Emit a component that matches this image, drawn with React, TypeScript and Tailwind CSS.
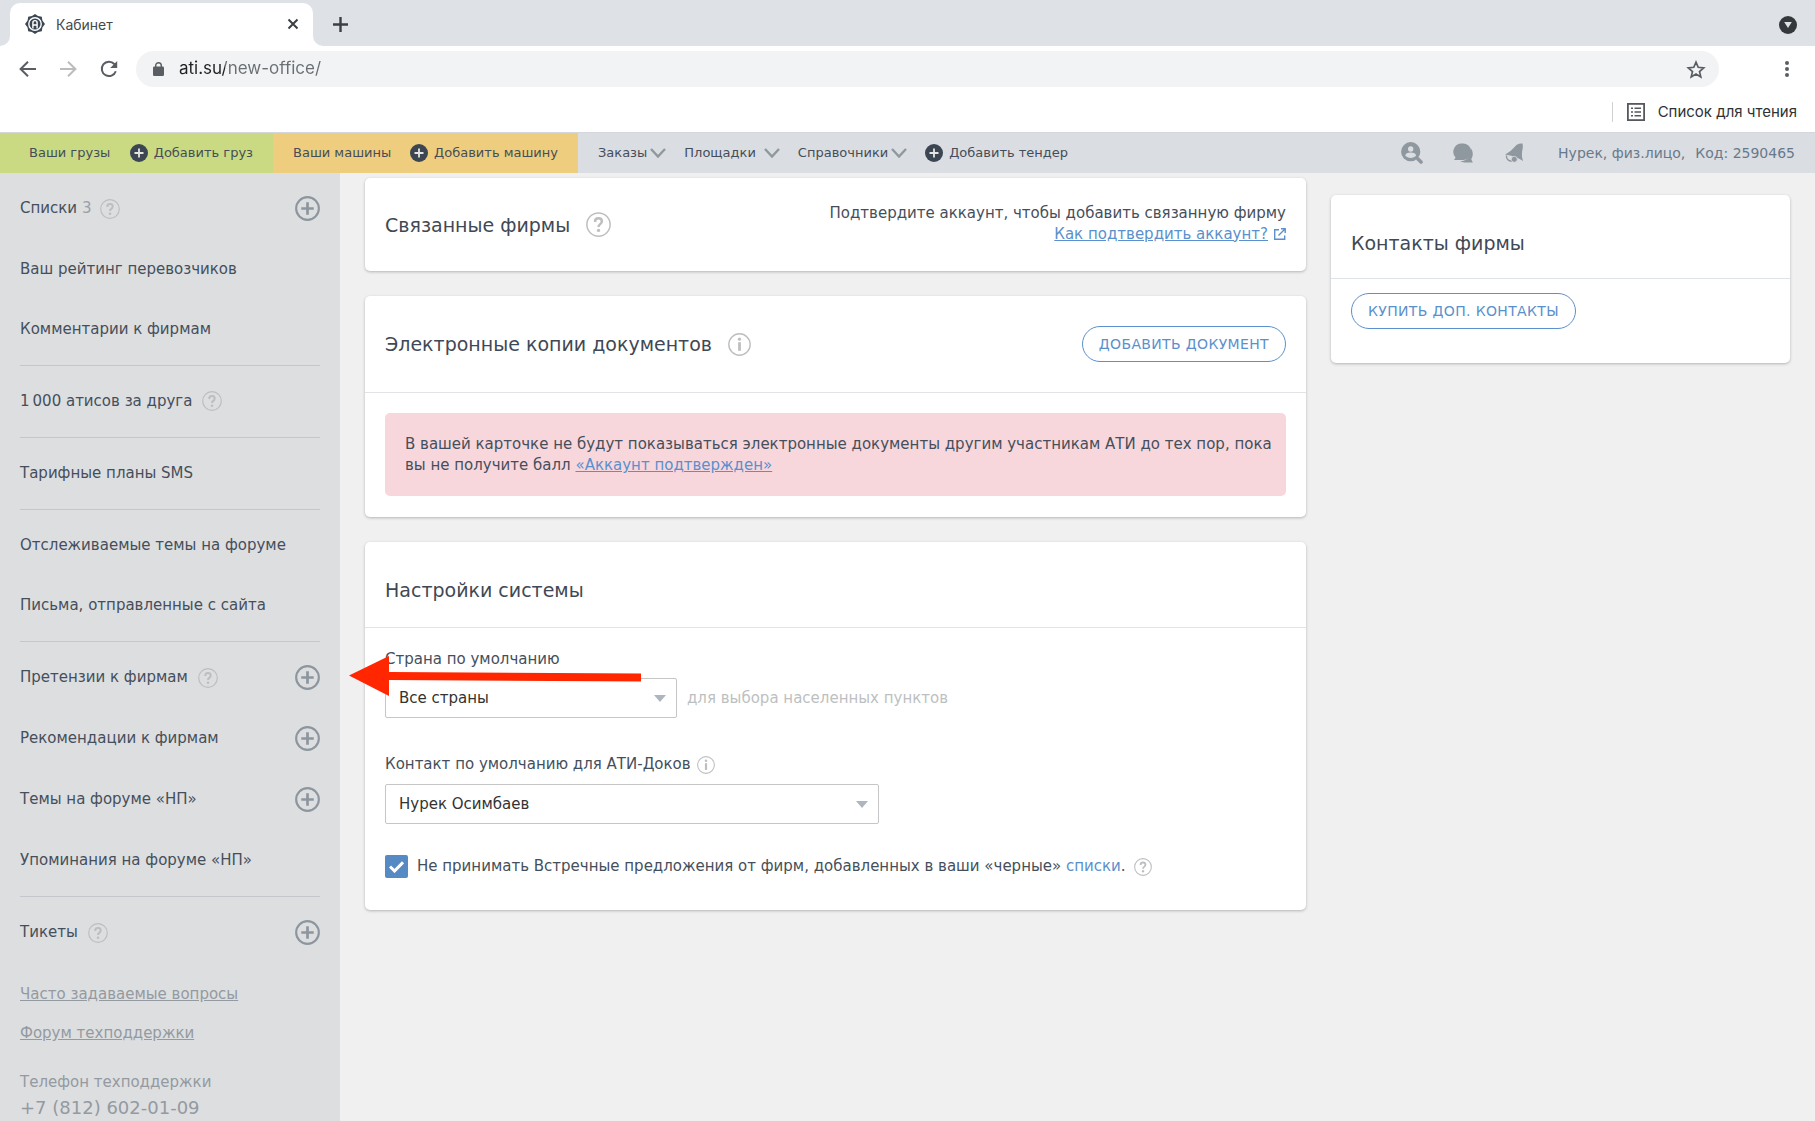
import type { ReactNode } from 'react';

function QuestionIcon({ size = 20 }: { size?: number }) {
  return (
    <svg width={size} height={size} viewBox="0 0 20 20" fill="none" className="shrink-0 text-[#bcbec0]" aria-hidden="true">
      <circle cx="10" cy="10" r="9.3" stroke="currentColor" strokeWidth="1.2" />
      <path d="M7.3 7.9V7.4C7.3 5.9 8.4 5 10 5s2.7.9 2.7 2.4c0 1.2-.6 1.8-1.5 2.5-.8.6-1.2 1-1.2 2.1" stroke="currentColor" strokeWidth="2" />
      <circle cx="10" cy="14.7" r="1.3" fill="currentColor" />
    </svg>
  );
}

function InfoIcon({ size = 20 }: { size?: number }) {
  return (
    <svg width={size} height={size} viewBox="0 0 20 20" fill="none" className="shrink-0 text-[#bcbec0]" aria-hidden="true">
      <circle cx="10" cy="10" r="9.3" stroke="currentColor" strokeWidth="1.2" />
      <circle cx="10" cy="5.4" r="1.4" fill="currentColor" />
      <path d="M10 8v7.5" stroke="currentColor" strokeWidth="2.4" />
    </svg>
  );
}

function AddCircle() {
  return (
    <svg width="25" height="25" viewBox="0 0 26 26" fill="none" className="text-[#8d969e]" aria-hidden="true">
      <circle cx="13" cy="13" r="11.8" stroke="currentColor" strokeWidth="2.2" />
      <path d="M13 6.5v13M6.5 13h13" stroke="currentColor" strokeWidth="2.8" />
    </svg>
  );
}

function PlusDot() {
  return (
    <svg width="18" height="18" viewBox="0 0 18 18" fill="none" className="shrink-0" aria-hidden="true">
      <circle cx="9" cy="9" r="9" fill="#3c4653" />
      <path d="M9 4.5v9M4.5 9h9" stroke="#e4e6df" strokeWidth="1.8" />
    </svg>
  );
}

function Chevron() {
  return (
    <svg width="16" height="10" viewBox="0 0 16 10" fill="none" className="shrink-0" aria-hidden="true">
      <path d="M1 1l7 7.5L15 1" stroke="#8f999d" strokeWidth="2.4" />
    </svg>
  );
}

function SiteLogo() {
  return (
    <svg width="20" height="20" viewBox="0 0 20 20" fill="none" aria-hidden="true">
      <path d="M10 0l3 1.900 3.800.800.600 3.900L20 10l-2.600 3.400-.6 3.900-3.800.8L10 20l-3-1.900-3.800-.8-.6-3.900L0 10l2.600-3.400.6-3.900L7 1.900z" fill="#3c4653" />
      <circle cx="10" cy="10" r="6.900" fill="#fff" />
      <circle cx="10" cy="10" r="5.500" fill="#3c4653" />
      <path d="M7.900 14.500V8.700a2.100 2.100 0 0 1 4.200 0v5.800M7.900 11h4.200" stroke="#fff" strokeWidth="1.400" />
    </svg>
  );
}

function BrowserChrome() {
  return (
    <header className="font-['Inter',sans-serif]">
      <div className="flex h-[46px] items-end bg-[#dee1e6] pl-[10px] pr-[18px]">
        <div className="relative flex h-[43px] w-[303px] items-center rounded-t-[10px] bg-white pb-px pl-[15px] pr-[14px]">
          <SiteLogo />
          <span className="ml-[11px] flex-1 text-[14px] text-[#45494d]">Кабинет</span>
          <button aria-label="Закрыть вкладку">
            <svg width="12" height="12" viewBox="0 0 12 12" aria-hidden="true">
              <path d="M1.500 1.500l9 9M10.500 1.500l-9 9" stroke="#3c4043" strokeWidth="2" />
            </svg>
          </button>
          <svg className="absolute bottom-0 -left-[10px]" width="10" height="10" viewBox="0 0 10 10" aria-hidden="true">
            <path d="M10 0v10H0A10 10 0 0 0 10 0z" fill="#fff" />
          </svg>
          <svg className="absolute bottom-0 -right-[10px]" width="10" height="10" viewBox="0 0 10 10" aria-hidden="true">
            <path d="M0 0v10h10A10 10 0 0 1 0 0z" fill="#fff" />
          </svg>
        </div>
        <button aria-label="Новая вкладка" className="ml-5 flex h-[43px] items-center">
          <svg width="15" height="15" viewBox="0 0 15 15" aria-hidden="true">
            <path d="M7.500 0v15M0 7.500h15" stroke="#3c4043" strokeWidth="2.400" />
          </svg>
        </button>
        <button aria-label="Поиск вкладок" className="ml-auto flex h-[43px] items-center">
          <svg width="18" height="18" viewBox="0 0 18 18" aria-hidden="true">
            <circle cx="9" cy="9" r="9" fill="#35393c" />
            <path d="M5.200 6h7.600L9 12z" fill="#dee1e6" />
          </svg>
        </button>
      </div>

      <div className="flex h-[46px] items-center bg-white pl-[19px] pr-[25px]">
        <button aria-label="Назад">
          <svg width="17" height="16" viewBox="0 0 17 16" fill="none" aria-hidden="true">
            <path d="M17 8H2M9 .8L1.600 8 9 15.200" stroke="#5a5e63" strokeWidth="2" />
          </svg>
        </button>
        <button aria-label="Вперёд" className="ml-6">
          <svg width="17" height="16" viewBox="0 0 17 16" fill="none" aria-hidden="true">
            <path d="M0 8h15M8 .8L15.400 8 8 15.200" stroke="#babcbe" strokeWidth="2" />
          </svg>
        </button>
        <button aria-label="Обновить" className="ml-[23px]">
          <svg width="18" height="18" viewBox="0 0 18 18" fill="none" aria-hidden="true">
            <path d="M15.800 11.200A7.200 7.200 0 1 1 14.300 4l1.200 1.300" stroke="#5a5e63" strokeWidth="2" />
            <path d="M17.200 1v7h-7z" fill="#5a5e63" />
          </svg>
        </button>
        <div className="ml-[18px] flex h-9 flex-1 items-center rounded-full bg-[#f1f3f4] pl-[17px] pr-[13px]">
          <svg width="11" height="14" viewBox="0 0 11 14" fill="none" aria-hidden="true">
            <rect y="4.600" width="11" height="9.400" rx="1.200" fill="#5a5e63" />
            <path d="M2.700 5.500V3.500a2.800 2.800 0 0 1 5.600 0v2" stroke="#5a5e63" strokeWidth="1.400" />
          </svg>
          <input
            aria-label="Адрес страницы"
            defaultValue="ati.su/new-office/"
            className="ml-[15px] min-w-0 flex-1 bg-[linear-gradient(to_right,#202124_46px,#6a6e73_46px)] bg-clip-text text-[17px] text-transparent outline-none"
          />
          <button aria-label="Добавить в закладки">
            <svg width="20" height="19" viewBox="0 0 20 19" fill="none" aria-hidden="true">
              <path d="M10 2.200l2.200 5.100 5.500.5-4.200 3.700 1.300 5.400-4.800-2.900-4.800 2.900 1.300-5.400-4.200-3.700 5.500-.5z" stroke="#5a5e63" strokeWidth="1.700" />
            </svg>
          </button>
        </div>
        <button aria-label="Меню браузера" className="ml-[65px]">
          <svg width="6" height="18" viewBox="0 0 6 18" fill="#5a5e63" aria-hidden="true">
            <circle cx="3" cy="3" r="2" />
            <circle cx="3" cy="9" r="2" />
            <circle cx="3" cy="15" r="2" />
          </svg>
        </button>
      </div>

      <div className="flex h-10 items-center justify-end bg-white pr-[18px]">
        <span className="h-5 w-px bg-[#cfd1d4]" />
        <button className="ml-[14px] flex items-center gap-[13px] text-[15px] text-[#2f3235]">
          <svg width="18" height="18" viewBox="0 0 18 18" fill="none" aria-hidden="true">
            <rect x=".9" y=".9" width="16.200" height="16.200" stroke="#55595e" strokeWidth="1.800" />
            <path d="M4 5.200h2M4 9h2M4 12.800h2M7.500 5.200H14M7.500 9H14M7.500 12.800H14" stroke="#55595e" strokeWidth="1.600" />
          </svg>
          Список для чтения
        </button>
      </div>
    </header>
  );
}

function NavLink({ children }: { children: ReactNode }) {
  return (
    <a href="#" className="flex items-center gap-[6px] whitespace-nowrap">
      {children}
    </a>
  );
}

function SiteNav() {
  return (
    <nav className="flex h-[41px] items-stretch border-t border-[#d3d7dc] bg-[#dadde2] text-[13px] text-[#454e58]">
      <div className="flex w-[273px] items-center justify-between bg-[#c9da83] pl-[29px] pr-5">
        <NavLink>Ваши грузы</NavLink>
        <NavLink>
          <PlusDot />
          Добавить груз
        </NavLink>
      </div>
      <div className="flex w-[305px] items-center justify-between bg-[#efcd7e] pl-5 pr-5">
        <NavLink>Ваши машины</NavLink>
        <NavLink>
          <PlusDot />
          Добавить машину
        </NavLink>
      </div>
      <div className="flex flex-1 items-center gap-[18px] pl-5">
        <button className="flex items-center gap-[3px]">
          Заказы
          <Chevron />
        </button>
        <button className="flex items-center gap-2">
          Площадки
          <Chevron />
        </button>
        <button className="flex items-center gap-[3px]">
          Справочники
          <Chevron />
        </button>
        <NavLink>
          <PlusDot />
          Добавить тендер
        </NavLink>
      </div>
      <div className="flex items-center pr-5 text-[14px] text-[#67798b]">
        <button aria-label="Поиск фирм">
          <svg width="22" height="22" viewBox="0 0 22 22" fill="none" aria-hidden="true">
            <circle cx="9.700" cy="9.700" r="9.600" fill="#8f989e" />
            <circle cx="9.700" cy="7" r="2.700" fill="#dadde2" />
            <path d="M4.300 13.800c.2-2.200 2.200-3.200 5.400-3.200s5.200 1 5.400 3.200c-1.200 1.200-3.200 2.200-5.400 2.200s-4.200-1-5.400-2.200z" fill="#dadde2" />
            <path d="M17 17l3 3" stroke="#8f989e" strokeWidth="3.600" strokeLinecap="round" />
          </svg>
        </button>
        <button aria-label="Сообщения" className="ml-[30px]">
          <svg width="20" height="20" viewBox="0 0 20 20" fill="#8f989e" aria-hidden="true">
            <path d="M8.800.5a8.300 8.300 0 1 1 0 16.400H1l1.600-2.400A8.300 8.300 0 0 1 8.800.5z" />
            <path d="M18 5.500c2.200 3 2.400 7.500.2 10.500l1.600 3.400h-8c-2 0-3.500-.6-4.600-1.400 6 .6 11.400-5 10.800-12.500z" />
          </svg>
        </button>
        <button aria-label="Уведомления" className="ml-[32px]">
          <svg width="19" height="20" viewBox="0 0 19 20" fill="#8f989e" aria-hidden="true">
            <path d="M0 11.500C4 9.500 8 6 10.500 3 12 1 14 .2 17.500.5c1 4-.3 6-.5 9-.3 4 .2 6 1.200 8.500-5.200-3.500-11-5.500-18.200-6.500z" />
            <path d="M1.500 12.500c-.5 3.500 2.500 6 5.500 5.500" stroke="#8f989e" strokeWidth="1.400" fill="none" />
            <circle cx="9.300" cy="16.300" r="3" stroke="#dadde2" strokeWidth=".8" />
          </svg>
        </button>
        <a href="#" className="ml-[34px] flex gap-[10px] whitespace-nowrap">
          <span>Нурек, физ.лицо,</span>
          <span>Код: 2590465</span>
        </a>
      </div>
    </nav>
  );
}

type Item = { label: string; count?: string; help?: boolean; add?: boolean };

const GROUPS: Item[][] = [
  [{ label: 'Списки', count: '3', help: true, add: true }, { label: 'Ваш рейтинг перевозчиков' }, { label: 'Комментарии к фирмам' }],
  [{ label: '1\u2009000 атисов за друга', help: true }],
  [{ label: 'Тарифные планы SMS' }],
  [{ label: 'Отслеживаемые темы на форуме' }, { label: 'Письма, отправленные с сайта' }],
  [
    { label: 'Претензии к фирмам', help: true, add: true },
    { label: 'Рекомендации к фирмам', add: true },
    { label: 'Темы на форуме «НП»', add: true },
    { label: 'Упоминания на форуме «НП»' },
  ],
  [{ label: 'Тикеты', help: true, add: true }],
];

function Sidebar() {
  return (
    <aside className="w-[340px] shrink-0 bg-[#dddee0] px-5">
      {GROUPS.map((group, i) => (
        <ul key={i} className="flex flex-col gap-6 border-b border-[#c3c6cb] pb-[18px] pt-[17px] last-of-type:border-b-0">
          {group.map((item) => (
            <li key={item.label} className={item.add ? 'flex h-[37px] items-center' : 'flex h-9 items-center'}>
              <a href="#" className="whitespace-nowrap">
                {item.label}
                {item.count && <span className="ml-[5px] text-[#9aa0a7]">{item.count}</span>}
              </a>
              {item.help && (
                <button aria-label={`Справка: ${item.label}`} className={item.count ? 'ml-2' : 'ml-[10px]'}>
                  <QuestionIcon />
                </button>
              )}
              {item.add && (
                <button aria-label={`Добавить: ${item.label}`} className="ml-auto">
                  <AddCircle />
                </button>
              )}
            </li>
          ))}
        </ul>
      ))}
      <div className="flex flex-col items-start pt-[15px] text-[#939aa1]">
        <a href="#" className="leading-5 underline">Часто задаваемые вопросы</a>
        <a href="#" className="mt-[19px] leading-5 underline">Форум техподдержки</a>
        <p className="mt-[29px] leading-5">Телефон техподдержки</p>
        <p className="mt-1 text-[18px] leading-6">+7 (812) 602-01-09</p>
      </div>
    </aside>
  );
}

function Card({ children }: { children: ReactNode }) {
  return <section className="rounded-[5px] bg-white shadow-[0_1px_3px_rgba(0,0,0,0.25)]">{children}</section>;
}

function CardTitle({ children }: { children: ReactNode }) {
  return <h2 className="text-[19px] leading-6 text-[#3f4955]">{children}</h2>;
}

function PillButton({ children }: { children: ReactNode }) {
  return (
    <button className="h-9 whitespace-nowrap rounded-full border border-[#5a90cc] px-4 text-[14px] uppercase tracking-wide text-[#5a90cc]">
      {children}
    </button>
  );
}

function SelectBox({ id, value, children }: { id: string; value: string; children?: ReactNode }) {
  return (
    <div className="relative">
      <select id={id} className="h-10 w-full appearance-none rounded-[2px] border border-[#c6c6c6] bg-white pl-[13px] text-[#333]">
        <option>{value}</option>
      </select>
      <svg className="pointer-events-none absolute right-[11px] top-[17px]" width="12" height="7" viewBox="0 0 12 7" aria-hidden="true">
        <path d="M0 0h12L6 7z" fill="#adb5bf" />
      </svg>
      {children}
    </div>
  );
}

function CheckBox({ id }: { id: string }) {
  return (
    <span className="relative flex">
      <input id={id} type="checkbox" defaultChecked className="size-[23px] appearance-none rounded-[2px] bg-[#568ac4]" />
      <svg className="pointer-events-none absolute left-[4px] top-[6px]" width="15" height="12" viewBox="0 0 15 12" fill="none" aria-hidden="true">
        <path d="M1 5.500l4.500 4.500L14 1.300" stroke="#fff" strokeWidth="3" />
      </svg>
    </span>
  );
}

function RedArrow() {
  return (
    <svg className="pointer-events-none absolute -left-9 -top-[22px]" width="292" height="40" viewBox="0 0 292 40" aria-hidden="true">
      <path d="M0 19.500L40 0v16l252 1.500v8L40 24v16z" fill="#ff2600" />
    </svg>
  );
}

function MainColumn() {
  return (
    <main className="flex min-w-0 flex-1 flex-col gap-[25px]">
      <Card>
        <div className="flex h-[93px] items-center justify-between px-5">
          <div className="flex items-center gap-4">
            <CardTitle>Связанные фирмы</CardTitle>
            <button aria-label="Справка: связанные фирмы">
              <QuestionIcon size={25} />
            </button>
          </div>
          <div className="pb-[2px] text-right leading-[21px]">
            <p>Подтвердите аккаунт, чтобы добавить связанную фирму</p>
            <a href="#" className="inline-flex items-center gap-[6px] text-[#5a90cc]">
              <span className="underline">Как подтвердить аккаунт?</span>
              <svg width="12" height="12" viewBox="0 0 12 12" fill="none" aria-hidden="true">
                <path d="M5 1.700H.7v9.600h10V7.500M4.500 7.500l6-6M7 .8h4.200V5" stroke="currentColor" strokeWidth="1.400" />
              </svg>
            </a>
          </div>
        </div>
      </Card>

      <Card>
        <div className="flex h-[97px] items-center justify-between border-b border-[#e1e3e6] px-5">
          <div className="flex items-center gap-4">
            <CardTitle>Электронные копии документов</CardTitle>
            <button aria-label="Информация о копиях документов">
              <InfoIcon size={23} />
            </button>
          </div>
          <PillButton>Добавить документ</PillButton>
        </div>
        <div className="px-5 pb-[21px] pt-5">
          <p className="rounded-[5px] bg-[#f7d7dc] pb-5 pl-5 pr-2 pt-[21px] leading-[21px]">
            В вашей карточке не будут показываться электронные документы другим участникам АТИ до тех пор, пока вы не получите балл{' '}
            <a href="#" className="text-[#5a90cc] underline">«Аккаунт подтвержден»</a>
          </p>
        </div>
      </Card>

      <Card>
        <div className="flex h-[86px] items-center border-b border-[#e1e3e6] px-5 pt-[10px]">
          <CardTitle>Настройки системы</CardTitle>
        </div>
        <div className="px-5 pb-8 pt-[21px]">
          <label htmlFor="country" className="block leading-[21px]">Страна по умолчанию</label>
          <div className="mt-2 flex items-center gap-[10px]">
            <div className="w-[292px]">
              <SelectBox id="country" value="Все страны">
                <RedArrow />
              </SelectBox>
            </div>
            <span className="text-[#bdbfc1]">для выбора населенных пунктов</span>
          </div>
          <div className="mt-9 flex items-center gap-[6px]">
            <label htmlFor="contact" className="leading-[21px]">Контакт по умолчанию для АТИ-Доков</label>
            <button aria-label="Информация о контакте">
              <InfoIcon size={18} />
            </button>
          </div>
          <div className="mt-[9px] w-[494px]">
            <SelectBox id="contact" value="Нурек Осимбаев" />
          </div>
          <div className="mt-[31px] flex items-center">
            <CheckBox id="offers" />
            <label htmlFor="offers" className="ml-[9px]">
              Не принимать Встречные предложения от фирм, добавленных в ваши «черные»{' '}
              <a href="#" className="text-[#5a90cc]">списки</a>.
            </label>
            <button aria-label="Справка о встречных предложениях" className="ml-2">
              <QuestionIcon size={18} />
            </button>
          </div>
        </div>
      </Card>
    </main>
  );
}

export default function App() {
  return (
    <div className="flex min-h-screen flex-col bg-[#f0f0f0] font-['DejaVu_Sans',sans-serif] text-[15px] text-[#454f5b]">
      <BrowserChrome />
      <SiteNav />
      <div className="flex flex-1">
        <Sidebar />
        <div className="flex flex-1 items-start gap-[25px] px-[25px] pt-[5px]">
          <MainColumn />
          <div className="mt-[17px] w-[459px] shrink-0">
            <Card>
              <div className="flex h-[84px] items-center border-b border-[#dfe2e6] px-5 pt-[13px]">
                <CardTitle>Контакты фирмы</CardTitle>
              </div>
              <div className="px-5 pb-[34px] pt-[14px]">
                <PillButton>Купить доп. контакты</PillButton>
              </div>
            </Card>
          </div>
        </div>
      </div>
    </div>
  );
}
